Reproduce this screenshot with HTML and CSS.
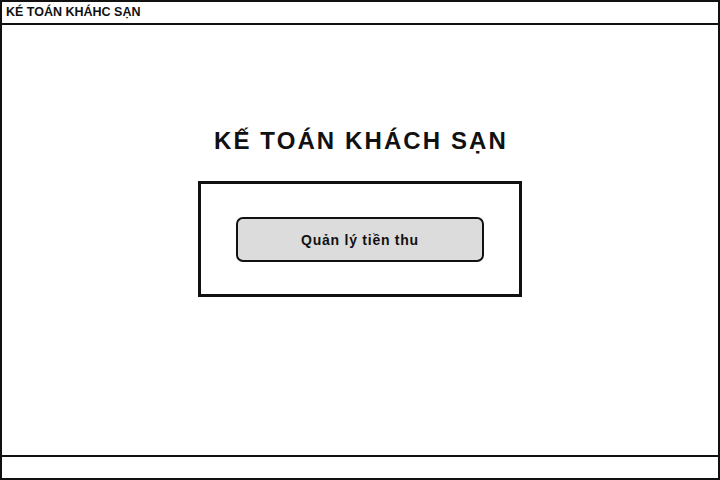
FILE: index.html
```html
<!DOCTYPE html>
<html lang="vi">
<head>
<meta charset="utf-8">
<title>KẾ TOÁN KHÁCH SẠN</title>
<link rel="stylesheet" href="styles.css">
</head>
<body>
<div class="window">
  <div class="titlebar">KÉ TOÁN KHÁHC SẠN</div>
  <div class="main">
    <h1 class="heading">KẾ TOÁN KHÁCH SẠN</h1>
    <div class="panel">
      <button class="btn">Quản lý tiền thu</button>
    </div>
  </div>
  <div class="statusbar"></div>
</div>
</body>
</html>
```

FILE: styles.css
```css
html, body {
  margin: 0;
  padding: 0;
  background: #fff;
}
.window {
  box-sizing: border-box;
  width: 720px;
  height: 480px;
  border: 2px solid #111;
  display: flex;
  flex-direction: column;
  font-family: "Liberation Sans", Arial, sans-serif;
  color: #111;
}
.titlebar {
  height: 21px;
  border-bottom: 2px solid #111;
  font-size: 12.5px;
  font-weight: bold;
  line-height: 21px;
  padding-left: 4px;
}
.main {
  flex: 1;
  display: flex;
  flex-direction: column;
  align-items: center;
  padding-top: 102px;
}
.heading {
  margin: 0;
  font-size: 24px;
  line-height: 28px;
  font-weight: bold;
  letter-spacing: 2.1px;
  padding-left: 2px;
}
.panel {
  margin-top: 26px;
  box-sizing: border-box;
  width: 324px;
  height: 116px;
  border: 3px solid #111;
  display: flex;
  justify-content: center;
  padding-top: 33px;
}
.btn {
  box-sizing: border-box;
  width: 248px;
  height: 45px;
  border: 2px solid #111;
  border-radius: 7px;
  background: #dcdcdc;
  font-family: "Liberation Sans", Arial, sans-serif;
  font-size: 14px;
  font-weight: bold;
  color: #111;
  letter-spacing: 0.75px;
}
.statusbar {
  height: 21px;
  border-top: 2px solid #111;
}
```
